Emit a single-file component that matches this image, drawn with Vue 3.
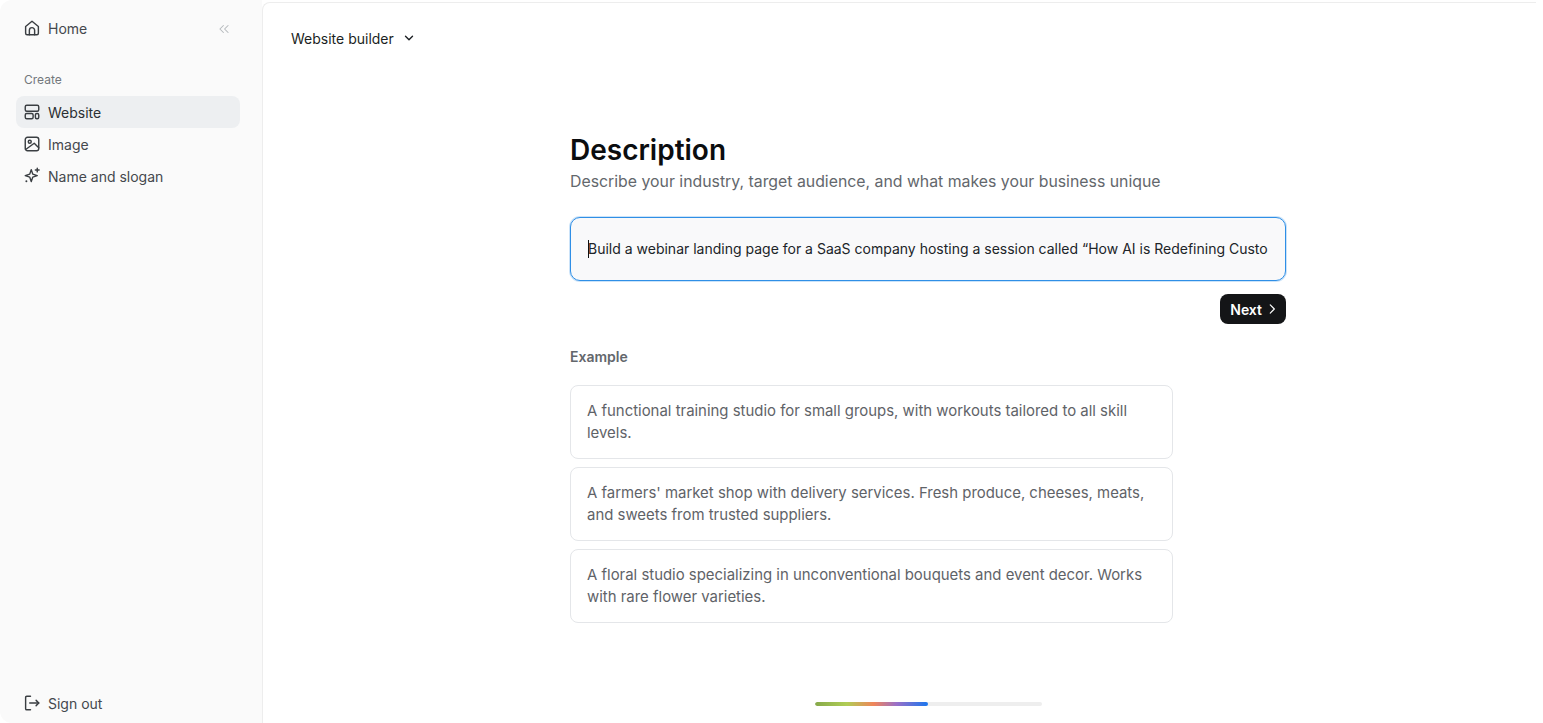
<script setup>
const examples = [
  'A functional training studio for small groups, with workouts tailored to all skill levels.',
  "A farmers' market shop with delivery services. Fresh produce, cheeses, meats, and sweets from trusted suppliers.",
  'A floral studio specializing in unconventional bouquets and event decor. Works with rare flower varieties.'
]
</script>

<template>
  <div class="page">
    <aside class="sidebar">
      <div class="top-row">
        <a class="nav-item">
          <svg class="icon" viewBox="0 0 24 24"><path d="M3.500 10 12 3l8.500 7v9a2 2 0 0 1-2 2h-13a2 2 0 0 1-2-2z"/><path d="M8.500 21v-6a3.500 3.500 0 0 1 7 0v6"/></svg>
          <span>Home</span>
        </a>
        <svg class="collapse" viewBox="0 0 24 24"><path d="m11 6-6 6 6 6"/><path d="m19 6-6 6 6 6"/></svg>
      </div>

      <div class="section-label">Create</div>
      <nav class="nav">
        <a class="nav-item active">
          <svg class="icon" viewBox="0 0 24 24"><rect x="3" y="3" width="18" height="8" rx="2"/><rect x="3" y="14" width="10.500" height="7" rx="2"/><rect x="16.500" y="14" width="4.500" height="7" rx="2"/></svg>
          <span>Website</span>
        </a>
        <a class="nav-item">
          <svg class="icon" viewBox="0 0 24 24"><rect x="3" y="3" width="18" height="18" rx="3"/><circle cx="9" cy="9" r="2"/><path d="m4 19 11-8 6 6"/></svg>
          <span>Image</span>
        </a>
        <a class="nav-item">
          <svg class="icon" viewBox="0 0 24 24"><path d="M11 3.500 13 9.500 19 11.500 13 13.500 11 19.500 9 13.500 3 11.500 9 9.500z"/><path d="M19 1.500v5M16.500 4h5"/><path d="M4.500 19h.01" stroke-width="2.600"/></svg>
          <span>Name and slogan</span>
        </a>
      </nav>

      <a class="nav-item signout">
        <svg class="icon" viewBox="0 0 24 24"><path d="M10 3H5a1.500 1.500 0 0 0-1.500 1.500v15A1.500 1.500 0 0 0 5 21h5"/><path d="M9 12h12"/><path d="m17.500 8.500 3.500 3.500-3.500 3.500"/></svg>
        <span>Sign out</span>
      </a>
    </aside>

    <main class="panel">
      <header class="topbar">
        <span>Website builder</span>
        <svg class="chevron" viewBox="0 0 24 24"><path d="m6 9 6 6 6-6"/></svg>
      </header>

      <div class="content">
        <div class="form">
          <h1>Description</h1>
          <p class="subtitle">Describe your industry, target audience, and what makes your business unique</p>

          <div class="prompt">
            <i class="caret"></i>
            <div class="prompt-text">Build a webinar landing page for a SaaS company hosting a session called “How AI is Redefining Customer Support”</div>
          </div>

          <div class="actions">
            <button class="next">
              Next
              <svg viewBox="0 0 24 24"><path d="m9 5 7 7-7 7"/></svg>
            </button>
          </div>

          <div class="example-label">Example</div>
          <div class="examples">
            <div v-for="text in examples" :key="text" class="card">{{ text }}</div>
          </div>
        </div>

        <div class="progress"><div class="progress-fill"></div></div>
      </div>
    </main>
  </div>
</template>

<style scoped>
.page {
  display: flex;
  height: 723px;
  overflow: hidden;
  background: #fff;
  font-family: Inter, "Liberation Sans", sans-serif;
  color: #1f2328;
}
.sidebar {
  width: 262px;
  flex-shrink: 0;
  box-sizing: border-box;
  display: flex;
  flex-direction: column;
  padding: 12px 22px 4px 16px;
  background: #fafafa;
  border-radius: 12px 0 0 12px;
}
.top-row {
  display: flex;
  align-items: center;
  justify-content: space-between;
  padding-right: 9px;
}
.collapse {
  width: 14px;
  height: 14px;
  fill: none;
  stroke: #b4b8bc;
  stroke-width: 1.800;
  stroke-linecap: round;
  stroke-linejoin: round;
  margin-top: 2px;
}
.section-label {
  margin: 26px 0 0 8px;
  height: 24px;
  font-size: 12px;
  line-height: 20px;
  color: #73777c;
}
.nav {
  display: flex;
  flex-direction: column;
  margin-top: 2px;
}
.nav-item {
  display: flex;
  align-items: center;
  gap: 7px;
  height: 32px;
  padding: 0 7px;
  border-radius: 8px;
  font-size: 14px;
  color: #44484d;
}
.nav-item.active {
  background: #edeff1;
  color: #2b2f33;
}
.icon {
  width: 18px;
  height: 18px;
  flex-shrink: 0;
  fill: none;
  stroke: #3a3e42;
  stroke-width: 1.900;
  stroke-linecap: round;
  stroke-linejoin: round;
}
.signout {
  margin-top: auto;
}
.panel {
  flex: 1;
  margin: 2px 7px 0 0;
  display: flex;
  flex-direction: column;
  background: #fff;
  border-top: 1px solid #ededed;
  border-left: 1px solid #ededed;
  border-top-left-radius: 8px;
}
.topbar {
  display: flex;
  align-items: center;
  gap: 8px;
  height: 24px;
  margin: 23px 0 0 28px;
  font-size: 14px;
  color: #1b1f23;
}
.chevron {
  width: 14px;
  height: 14px;
  fill: none;
  stroke: #1b1f23;
  stroke-width: 2.400;
  stroke-linecap: round;
  stroke-linejoin: round;
}
.content {
  flex: 1;
  width: 716px;
  margin-left: 307px;
  display: flex;
  flex-direction: column;
}
.form {
  flex: 1;
  padding-top: 82px;
}
h1 {
  margin: 0;
  font-size: 28px;
  line-height: 36px;
  font-weight: 600;
  color: #0b0d0f;
}
.subtitle {
  margin: 2px 0 0;
  font-size: 15.840px;
  line-height: 24px;
  color: #63676c;
}
.prompt {
  position: relative;
  margin-top: 23px;
  height: 64px;
  box-sizing: border-box;
  padding: 0 17px 2px;
  display: flex;
  align-items: center;
  background: #f9f9fa;
  border: 1px solid #2f8fe6;
  border-radius: 10px;
  box-shadow: 0 0 0 1px rgba(47, 143, 230, 0.25);
}
.prompt-text {
  overflow: hidden;
  white-space: nowrap;
  font-size: 14px;
  color: #202428;
}
.caret {
  position: absolute;
  left: 17px;
  top: 22px;
  width: 1px;
  height: 18px;
  background: #111;
}
.actions {
  display: flex;
  justify-content: flex-end;
  margin-top: 13px;
}
.next {
  display: flex;
  align-items: center;
  gap: 3px;
  height: 30px;
  padding: 0 7px 0 10px;
  border: none;
  border-radius: 8px;
  background: #141517;
  color: #fff;
  font-family: inherit;
  font-size: 14px;
  font-weight: 600;
}
.next svg {
  width: 14px;
  height: 14px;
  fill: none;
  stroke: #fff;
  stroke-width: 2;
  stroke-linecap: round;
  stroke-linejoin: round;
}
.example-label {
  margin-top: 23px;
  font-size: 14px;
  line-height: 20px;
  font-weight: 600;
  color: #63676c;
}
.examples {
  width: 603px;
  margin-top: 18px;
  display: flex;
  flex-direction: column;
  gap: 8px;
}
.card {
  box-sizing: border-box;
  height: 74px;
  padding: 14px 16px;
  border: 1px solid #e4e6e9;
  border-radius: 8px;
  font-size: 14.930px;
  line-height: 22px;
  color: #5f6368;
}
.progress {
  width: 227px;
  height: 4px;
  margin: 0 auto 17px;
  border-radius: 2px;
  background: #eeeeee;
  overflow: hidden;
}
.progress-fill {
  width: 113px;
  height: 100%;
  border-radius: 2px;
  background: linear-gradient(90deg, #86a94a 0%, #b0cd55 28%, #f0855a 52%, #9a70c8 72%, #1a76ee 100%);
}
</style>
